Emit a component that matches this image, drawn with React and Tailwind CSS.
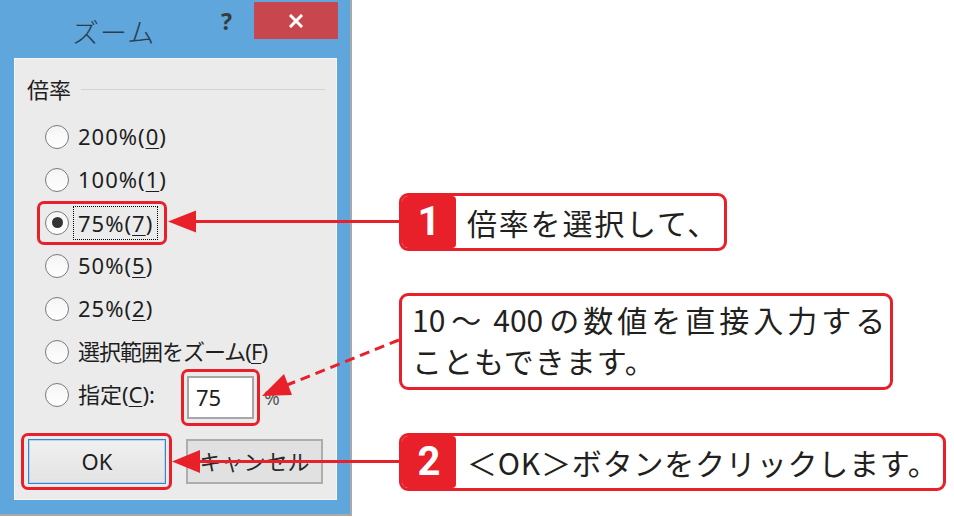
const red = 'border-[#e8202a]';

function Radio({ checked }) {
  return (
    <span className="flex h-[24px] w-[24px] shrink-0 items-center justify-center rounded-full border-[1.5px] border-[#7a7a7a] bg-[linear-gradient(180deg,#f4f4f4,#ffffff)]">
      {checked && <span className="h-[11px] w-[11px] rounded-full bg-[#333333]" />}
    </span>
  );
}

function Key({ children }) {
  return <span className="underline decoration-1 underline-offset-[3px]">{children}</span>;
}

function Row({ children }) {
  return <div className="flex h-[43px] items-center pl-[30px]">{children}</div>;
}

function Dialog() {
  return (
    <div className="flex h-[516px] w-[352px] shrink-0 flex-col border-r-2 border-b-2 border-[#a9a9a9] bg-[#5ea6dc]">
      <div className="flex h-[58px] items-start">
        <span className="ml-[72px] mt-[13px] w-[122px] text-[27px] font-light leading-[40px] tracking-[1px] text-[#2c3d4f]">
          ズーム
        </span>
        <span className="ml-[27px] mt-[6px] w-[16px] text-[23px] font-bold leading-[30px] text-[#3a3a3a]">?</span>
        <span className="ml-[17px] mt-[2px] flex h-[37px] w-[84px] items-center justify-center bg-[#c8464d]">
          <svg width="14" height="14" viewBox="0 0 14 14">
            <path d="M2 2 L12 12 M12 2 L2 12" stroke="#ffffff" strokeWidth="3" strokeLinecap="square" />
          </svg>
        </span>
      </div>

      <div className="ml-[14px] flex h-[442px] w-[323px] flex-col border border-[#f6f6f6] bg-[#ebebeb] text-[22px] text-[#1e1e1e]">
        <div className="mt-[10px] flex h-[40px] items-center pl-[12px]">
          <span className="leading-none">倍率</span>
          <span className="ml-[10px] mr-[11px] h-px flex-1 bg-[#d3d3d3]" />
        </div>

        <div className="mt-[6px] flex flex-col">
          <Row>
            <Radio />
            <span className="ml-[9px] tracking-[1px]">200%(<Key>0</Key>)</span>
          </Row>
          <Row>
            <Radio />
            <span className="ml-[9px] tracking-[1px]">100%(<Key>1</Key>)</span>
          </Row>
          <Row>
            <span className={`-ml-[8px] flex h-[44px] w-[130px] items-center rounded-[7px] border-[3px] ${red} pl-[5px]`}>
              <Radio checked />
              <span className="ml-[4px] border border-dotted border-black px-[4px] leading-[32px] tracking-[1px]">
                75%(<Key>7</Key>)
              </span>
            </span>
          </Row>
          <Row>
            <Radio />
            <span className="ml-[9px] tracking-[1px]">50%(<Key>5</Key>)</span>
          </Row>
          <Row>
            <Radio />
            <span className="ml-[9px] tracking-[1px]">25%(<Key>2</Key>)</span>
          </Row>
          <Row>
            <Radio />
            <span className="ml-[9px] tracking-[-1px]">
              選択範囲をズーム(<Key>F</Key>)
            </span>
          </Row>
          <Row>
            <Radio />
            <span className="ml-[9px] w-[103px]">
              指定(<Key>C</Key>):
            </span>
            <span className={`mt-[5px] flex rounded-[7px] border-[3px] ${red} px-[3px] py-[4px]`}>
              <span className="flex h-[43px] w-[67px] items-center border-2 border-[#a7a7a7] bg-white pl-[7px]">75</span>
            </span>
            <span className="ml-[4px] mt-[8px] text-[19px] text-[#555555]">%</span>
          </Row>
        </div>

        <div className="mt-[17px] flex items-center pl-[6px]">
          <span className={`flex rounded-[7px] border-[3px] ${red} p-[3px] pl-[4px]`}>
            <span className="flex h-[45px] w-[138px] items-center justify-center border border-[#3d84c6] bg-[linear-gradient(180deg,#f0f0f0,#e3e3e3)] shadow-[inset_0_0_0_1px_#b7d5f0]">
              OK
            </span>
          </span>
          <span className="ml-[14px] flex h-[45px] w-[137px] items-center justify-center border-2 border-[#adadad] bg-[#e1e1e1] text-[#2a2a2a]">
            キャンセル
          </span>
        </div>
      </div>
    </div>
  );
}

function Badge({ n }) {
  return (
    <span className="flex w-[54px] shrink-0 items-center justify-center rounded-r-[4px] bg-[#e8202a] font-['Roboto',sans-serif] text-[40px] font-bold leading-none text-white">
      {n}
    </span>
  );
}

function Step({ n, width, tracking, children }) {
  return (
    <div className={`flex h-[58px] overflow-hidden rounded-[9px] border-[3px] ${red} bg-white`} style={{ width }}>
      <Badge n={n} />
      <span className={`ml-[11px] flex items-center whitespace-nowrap text-[30px] leading-none text-[#231f20] ${tracking}`}>
        {children}
      </span>
    </div>
  );
}

function Arrows() {
  return (
    <svg className="pointer-events-none absolute left-0 top-0" width="954" height="517" viewBox="0 0 954 517">
      <g fill="#e8202a" stroke="none">
        <rect x="192" y="220" width="208" height="3" />
        <polygon points="168,221.5 196,210.5 196,232.5" />
        <rect x="196" y="460" width="204" height="3" />
        <polygon points="172,461.5 200,450 200,473" />
        <polygon points="262,396 284,374 292,395" />
      </g>
      <line x1="399" y1="340" x2="287" y2="385" stroke="#e8202a" strokeWidth="3" strokeDasharray="10 6" />
    </svg>
  );
}

export default function App() {
  return (
    <div className="relative flex h-[517px] w-[954px] overflow-hidden bg-white font-['Noto_Sans','Noto_Sans_CJK_JP',sans-serif]">
      <Dialog />

      <div className="ml-[47px] flex flex-col items-start pt-[193px] font-['Noto_Sans_CJK_JP',sans-serif]">
        <Step n="1" width={328} tracking="tracking-[1.8px]">倍率を選択して、</Step>

        <div className={`mt-[42px] flex h-[97px] w-[494px] flex-col rounded-[9px] border-[3px] ${red} bg-white pl-[10px] pt-[3px] text-[30px] leading-[41px] text-[#231f20]`}>
          <span className="flex whitespace-nowrap">
            <span>10</span>
            <span className="ml-[6px] mr-[12px]">～</span>
            <span>400</span>
            <span className="ml-[6px] tracking-[4px]">の数値を直接入力する</span>
          </span>
          <span className="tracking-[1px]">こともできます。</span>
        </div>

        <div className="mt-[43px]">
          <Step n="2" width={547} tracking="tracking-[0.8px]">＜OK＞ボタンをクリックします。</Step>
        </div>
      </div>

      <Arrows />
    </div>
  );
}
